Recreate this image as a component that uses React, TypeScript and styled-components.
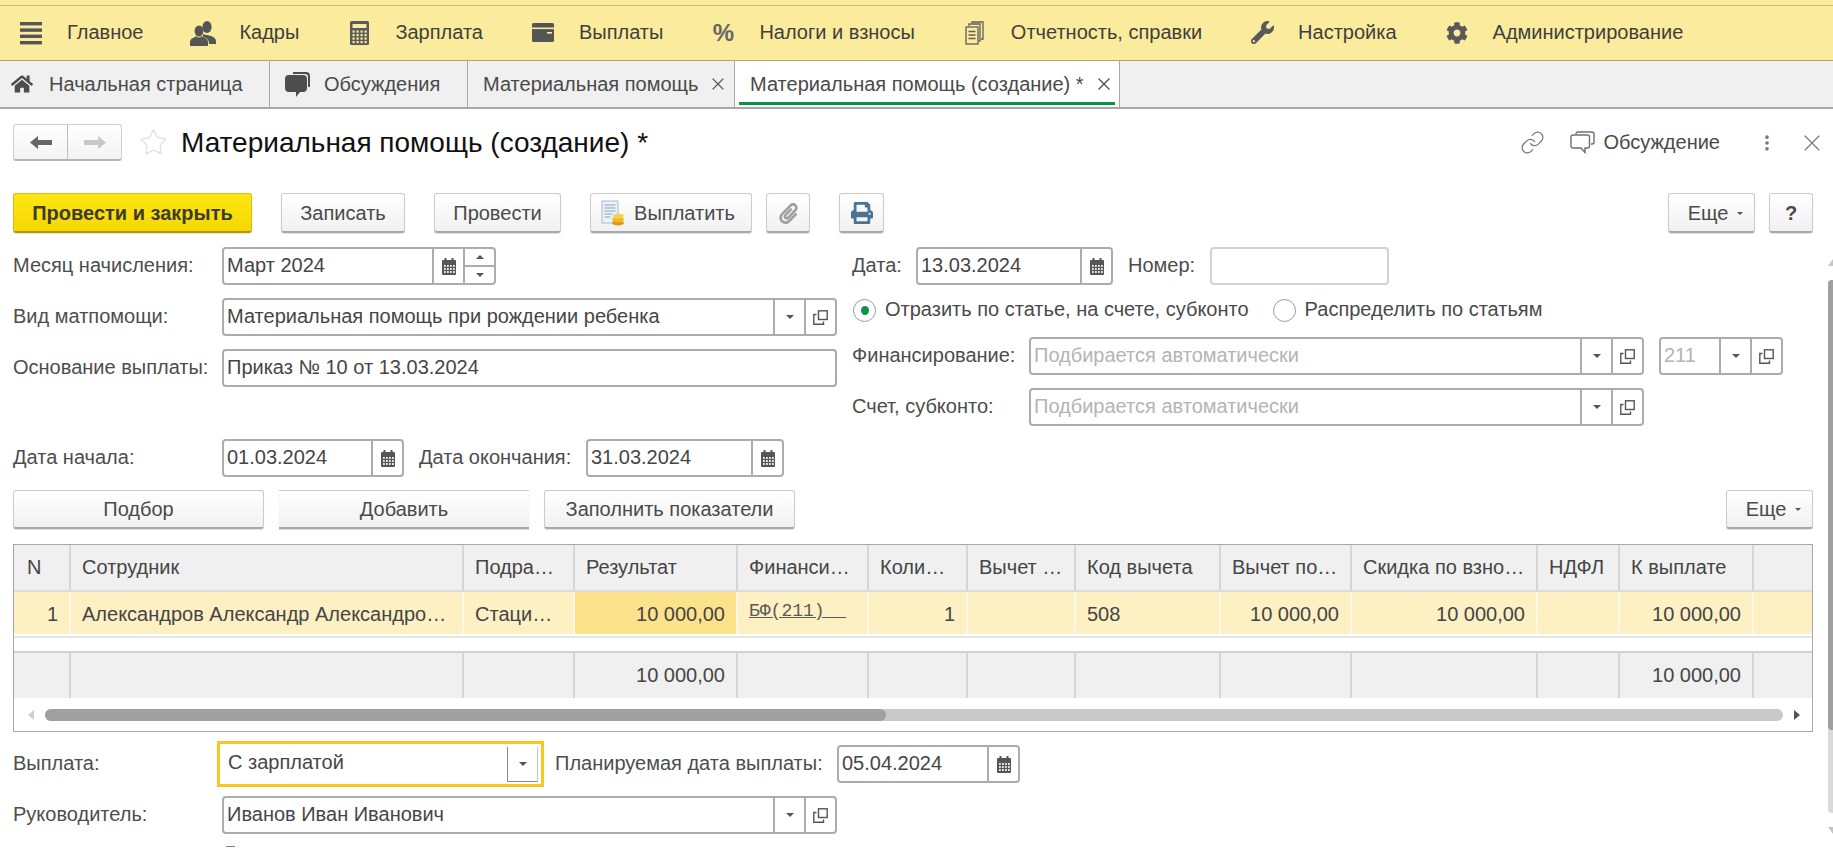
import React from 'react'
import styled, { createGlobalStyle } from 'styled-components'
import { FaHome, FaWrench, FaCog, FaPrint, FaPaperclip } from 'react-icons/fa'
import { Link, Star, X, EllipsisVertical } from 'lucide-react'

const GlobalStyle = createGlobalStyle`
  html, body {
    margin: 0;
    height: 100%;
    overflow: hidden;
    background: #fff;
  }
  body {
    font-family: "Liberation Sans", Arial, sans-serif;
    font-size: 20px;
    color: #4a4a4a;
  }
  * { box-sizing: border-box; }
`

const Page = styled.div`
  width: 1833px;
  height: 857px;
  display: flex;
  flex-direction: column;
  overflow: hidden;
`

/* top menu */
const TopMenu = styled.div`
  height: 61px;
  flex-shrink: 0;
  display: flex;
  align-items: center;
  gap: 45px;
  padding: 5px 0 0 16px;
  background: linear-gradient(#fbeb9c 0 5px, #cbbd78 5px 6px, #fbeb9c 6px);
  border-bottom: 1px solid #b3a768;
`

const MenuItem = styled.div`
  display: flex;
  align-items: center;
  gap: 21px;
  color: #3f3f3f;
  white-space: nowrap;
`

const MenuIcon = styled.span`
  width: 30px;
  display: flex;
  justify-content: center;
  color: #595959;
`

const PercentGlyph = styled.span`
  font-size: 24px;
  font-weight: 700;
  color: #666;
`

/* tabs */
const TabBar = styled.div`
  height: 48px;
  flex-shrink: 0;
  display: flex;
  background: #f0f0f0;
  border-bottom: 2px solid #a8a8a8;
`

const Tab = styled.div<{ $w: number; $pad: number; $active?: boolean }>`
  position: relative;
  width: ${p => p.$w}px;
  flex-shrink: 0;
  display: flex;
  align-items: center;
  padding-left: ${p => p.$pad}px;
  border-right: 1px solid #a8a8a8;
  background: ${p => (p.$active ? '#fff' : 'transparent')};
  color: #4a4a4a;
  white-space: nowrap;
  ${p =>
    p.$active &&
    `&::after {
      content: '';
      position: absolute;
      left: 4px;
      right: 4px;
      bottom: 2px;
      height: 3px;
      background: #0b9444;
    }`}
`

const TabIcon = styled.span<{ $gap: number }>`
  display: flex;
  margin-right: ${p => p.$gap}px;
  color: #4d4d4d;
`

const TabClose = styled.span`
  display: flex;
  margin-left: 10px;
  color: #555;
`

/* work area */
const Workspace = styled.div`
  flex: 1;
  display: flex;
  min-height: 0;
`

const Content = styled.div`
  flex: 1;
  min-width: 0;
  padding: 15px 15px 0 13px;
`

const VScroll = styled.div`
  width: 5px;
  flex-shrink: 0;
  padding-top: 150px;
  display: flex;
  flex-direction: column;
  align-items: flex-end;
`

const VArrow = styled.span<{ $down?: boolean }>`
  width: 5px;
  height: 0;
  border-left: 5px solid transparent;
  ${p => (p.$down ? 'border-top: 7px solid #c4c4c4;' : 'border-bottom: 7px solid #c4c4c4;')}
`

const VTrack = styled.div`
  width: 5px;
  height: 533px;
  margin: 14px 0 14px;
  background: #d9d9d9;
  border-radius: 4px 0 0 4px;
`

const VThumb = styled.div`
  height: 450px;
  background: #a0a0a0;
  border-radius: 4px 0 0 4px;
`

const TitleRow = styled.div`
  height: 37px;
  display: flex;
  align-items: center;
  margin-right: -13px;
`

const NavGroup = styled.div`
  width: 109px;
  height: 37px;
  display: flex;
  border: 1px solid #cfcfcf;
  border-bottom: 2px solid #b5b5b5;
  border-radius: 3px;
  background: linear-gradient(#fff, #f3f3f3);
`

const NavButton = styled.div<{ $first?: boolean }>`
  flex: 1;
  display: flex;
  align-items: center;
  justify-content: center;
  ${p => p.$first && 'border-right: 1px solid #bdbdbd;'}
`

const StarWrap = styled.span`
  display: flex;
  margin: 0 13px 0 17px;
  color: #dedede;
`

const Title = styled.h1`
  margin: 0;
  font-size: 28px;
  font-weight: 400;
  color: #111;
  white-space: nowrap;
`

const TitleActions = styled.div`
  margin-left: auto;
  display: flex;
  align-items: center;
  color: #777;
`

const DiscussText = styled.span`
  margin: 0 37px 0 8px;
  color: #4a4a4a;
`

const ActionIcon = styled.span<{ $mr?: number }>`
  display: flex;
  margin-right: ${p => p.$mr ?? 0}px;
`

const Toolbar = styled.div`
  height: 40px;
  margin-top: 32px;
  display: flex;
  gap: 29px;
`

const ButtonGroup = styled.div<{ $right?: boolean }>`
  display: flex;
  gap: 14px;
  ${p => p.$right && 'margin-left: auto;'}
`

const Button = styled.div<{ $w: number; $primary?: boolean; $flat?: boolean }>`
  width: ${p => p.$w}px;
  display: flex;
  align-items: center;
  justify-content: center;
  gap: 9px;
  padding-top: 1px;
  border: 1px solid #cbcbcb;
  border-bottom: 2px solid #a8a8a8;
  border-radius: 3px;
  background: linear-gradient(#fff, #f1f1f1);
  box-shadow: 0 1px 1px rgba(0, 0, 0, 0.12);
  color: #4a4a4a;
  white-space: nowrap;
  ${p =>
    p.$primary &&
    `background: linear-gradient(#ffe516, #f5d800);
     border-color: #d6bd10 #d6bd10 #b09a10;
     font-weight: 700;
     color: #3c3c2c;`}
  ${p => p.$flat && 'border-left: 0; border-right: 0; border-radius: 0;'}
`

const PayButton = styled(Button)`
  padding-right: 6px;
`

const MoreButton = styled(Button)`
  padding-left: 8px;
`

const Caret = styled.span<{ $up?: boolean }>`
  width: 0;
  height: 0;
  border-left: 4px solid transparent;
  border-right: 4px solid transparent;
  ${p => (p.$up ? 'border-bottom: 4px solid #555;' : 'border-top: 4px solid #555;')}
`

const SmallCaret = styled(Caret)`
  border-left-width: 3px;
  border-right-width: 3px;
  border-top-width: 3px;
`

/* form */
const FormGrid = styled.div`
  margin-top: 14px;
  display: grid;
  grid-template-columns: 823px 1fr;
  column-gap: 16px;
`

const Column = styled.div`
  display: flex;
  flex-direction: column;
`

const Row = styled.div<{ $mt?: number }>`
  height: 38px;
  display: flex;
  align-items: center;
  margin-top: ${p => p.$mt ?? 0}px;
`

const Label = styled.span<{ $w?: number; $ml?: number }>`
  ${p => p.$w && `width: ${p.$w}px;`}
  ${p => p.$ml && `margin-left: ${p.$ml}px;`}
  flex-shrink: 0;
  padding-bottom: 2px;
  color: #4d4d4d;
  white-space: nowrap;
`

const Field = styled.div<{ $w: number; $light?: boolean; $ml?: number }>`
  width: ${p => p.$w}px;
  height: 38px;
  flex-shrink: 0;
  display: flex;
  margin-left: ${p => p.$ml ?? 0}px;
  border: 2px solid ${p => (p.$light ? '#d2d2d2' : '#acacac')};
  border-radius: 4px;
  background: #fff;
`

const FieldText = styled.div<{ $muted?: boolean }>`
  flex: 1;
  min-width: 0;
  display: flex;
  align-items: center;
  padding: 0 0 2px 3px;
  color: ${p => (p.$muted ? '#b4b4b4' : '#464646')};
  white-space: nowrap;
  overflow: hidden;
`

const FieldCell = styled.div`
  width: 31px;
  flex-shrink: 0;
  display: flex;
  align-items: center;
  justify-content: center;
  border-left: 2px solid #acacac;
  color: #555;
`

const SpinCell = styled(FieldCell)`
  flex-direction: column;
`

const SpinPart = styled.div<{ $top?: boolean }>`
  flex: 1;
  width: 100%;
  display: flex;
  align-items: center;
  justify-content: center;
  ${p => p.$top && 'border-bottom: 2px solid #acacac;'}
`

const RadioRow = styled.div`
  height: 38px;
  margin: 5px 0 9px;
  display: flex;
  align-items: center;
  white-space: nowrap;
`

const Radio = styled.span<{ $on?: boolean; $ml?: number }>`
  width: 23px;
  height: 23px;
  flex-shrink: 0;
  margin: 2px 9px 0 ${p => p.$ml ?? 1}px;
  border: 1px solid #9a9a9a;
  border-radius: 50%;
  display: flex;
  align-items: center;
  justify-content: center;
  &::after {
    content: '';
    width: 8px;
    height: 9px;
    border-radius: 50%;
    background: ${p => (p.$on ? '#0b9444' : 'transparent')};
  }
`

const ButtonsRow = styled.div`
  height: 39px;
  margin-top: 13px;
  display: flex;
  gap: 15px;
`

/* table */
const columns = '57px 393px 111px 163px 131px 99px 108px 145px 131px 186px 82px 134px 1fr'

const TableFrame = styled.div`
  height: 188px;
  margin-top: 15px;
  display: flex;
  flex-direction: column;
  border: 1px solid #a8a8a8;
`

const TableRow = styled.div<{ $h: number; $bg: string; $line?: boolean }>`
  height: ${p => p.$h}px;
  flex-shrink: 0;
  display: grid;
  grid-template-columns: ${columns};
  background: ${p => p.$bg};
  ${p => p.$line && 'border-bottom: 2px solid #dcdcdc;'}
`

const Cell = styled.div<{ $right?: boolean; $active?: boolean; $sep?: string }>`
  display: flex;
  align-items: center;
  justify-content: ${p => (p.$right ? 'flex-end' : 'flex-start')};
  padding: 0 11px;
  border-right: 2px solid ${p => p.$sep ?? '#d6d6d6'};
  ${p => p.$active && 'background: #fde28c;'}
  color: #454545;
  white-space: nowrap;
  overflow: hidden;
  &:first-child {
    padding-left: 13px;
  }
  &:last-child {
    border-right: 0;
  }
`

const DataCell = styled(Cell)`
  padding-top: 2px;
`

const MonoLink = styled.span`
  font-family: "Liberation Mono", "Courier New", monospace;
  font-size: 18px;
  text-decoration: underline;
  white-space: pre;
  color: #5a5a5a;
  margin-top: -6px;
`

const EmptyRow = styled.div`
  height: 17px;
  flex-shrink: 0;
  border-top: 2px solid #e6e6e6;
  border-bottom: 2px solid #d2d2d2;
  margin-top: 2px;
`

const HScroll = styled.div`
  flex: 1;
  display: flex;
  align-items: center;
  padding: 0 12px 0 14px;
  gap: 11px;
`

const HArrow = styled.span<{ $right?: boolean }>`
  width: 0;
  height: 0;
  flex-shrink: 0;
  border-top: 5px solid transparent;
  border-bottom: 5px solid transparent;
  ${p => (p.$right ? 'border-left: 6px solid #555;' : 'border-right: 6px solid #cdcdcd;')}
`

const HTrack = styled.div`
  flex: 1;
  height: 12px;
  border-radius: 6px;
  background: #c9c9c9;
`

const HThumb = styled.div`
  width: 841px;
  height: 12px;
  border-radius: 6px;
  background: #a0a0a0;
`

/* bottom */
const PayRow = styled.div`
  height: 46px;
  margin-top: 9px;
  display: flex;
  align-items: center;
`

const FocusField = styled.div`
  width: 327px;
  height: 46px;
  flex-shrink: 0;
  display: flex;
  align-items: center;
  padding: 0 3px 0 8px;
  border: 3px solid #f8c81e;
  background: #fff;
  color: #464646;
`

const FocusText = styled.span`
  flex: 1;
  padding-bottom: 3px;
`

const FocusCell = styled.span`
  width: 31px;
  height: 35px;
  display: flex;
  align-items: center;
  justify-content: center;
  border-left: 1px solid #8a8a8a;
  border-bottom: 1px solid #8a8a8a;
  border-right: 1px solid #c8c8c8;
`

const ManagerRow = styled(Row)`
  margin-top: 9px;
`

const Dash = styled.div`
  width: 9px;
  height: 1px;
  margin: 12px 0 0 213px;
  background: #8f8458;
`

/* drawings */
const BurgerIcon = () => (
  <svg width="22" height="24" viewBox="0 0 22 24" fill="#555">
    <rect y="1" width="22" height="3.4" />
    <rect y="7.4" width="22" height="3.4" />
    <rect y="13.6" width="22" height="3.4" />
    <rect y="20" width="22" height="3.4" />
  </svg>
)

const PeopleIcon = () => (
  <svg width="26" height="26" viewBox="0 0 26 26" fill="#555">
    <ellipse cx="17" cy="7" rx="4.6" ry="6" />
    <path d="M13 14c5 2 12 1 13 7v3h-7c0-4-2-6-6-7z" />
    <ellipse cx="9" cy="11" rx="4.4" ry="5.6" />
    <path d="M0 26v-4c0-4 5-4 6-6 2 2 4 2 6 0 1 2 6 2 6 6v4z" />
  </svg>
)

const CalcIcon = () => (
  <svg width="19" height="24" viewBox="0 0 19 24">
    <rect width="19" height="24" rx="1.5" fill="#5a5a5a" />
    <rect x="2.5" y="3" width="14" height="4" fill="#fbeb9c" />
    {[9.5, 13, 16.5, 20].map(y =>
      [2.5, 6.5, 10.5, 14.5].map(x => <rect key={`${x}-${y}`} x={x} y={y} width="2.2" height="2.2" fill="#fbeb9c" />)
    )}
  </svg>
)

const WalletIcon = () => (
  <svg width="22" height="19" viewBox="0 0 22 19">
    <rect width="22" height="19" rx="1.5" fill="#555" />
    <rect y="4.5" width="22" height="1.6" fill="#fbeb9c" />
    <rect x="15" y="9" width="5" height="1.6" fill="#fbeb9c" />
  </svg>
)

const DocsIcon = () => (
  <svg width="19" height="24" viewBox="0 0 19 24" fill="none" stroke="#5f5f5f" strokeWidth="1.3">
    <rect x="1" y="6" width="12" height="17" fill="#fbeb9c" />
    <path d="M3.5 10.5h7M3.5 14h7M3.5 17.5h7" strokeWidth="1.6" />
    <path d="M4 5V3h11v17h-1.5M7 2V1h11v17h-2" />
  </svg>
)

const ChatsFilled = () => (
  <svg width="25" height="25" viewBox="0 0 25 25" fill="#4d4d4d">
    <path d="M8 0h13a4 4 0 0 1 4 4v11h-2V5a3 3 0 0 0-3-3H8z" />
    <path d="M4 3h14a4 4 0 0 1 4 4v9a4 4 0 0 1-4 4h-3l-4 5v-5H4a4 4 0 0 1-4-4V7a4 4 0 0 1 4-4z" />
  </svg>
)

const ChatsOutline = () => (
  <svg width="25" height="23" viewBox="0 0 25 23" fill="none" stroke="#6f6f6f" strokeWidth="1.4">
    <path d="M6 3V2.5A1.8 1.8 0 0 1 7.8 1H22a2 2 0 0 1 2 2v8a2 2 0 0 1-2 2h-1" />
    <path d="M3 4h14.5a2 2 0 0 1 2 2v9a2 2 0 0 1-2 2H15v4.5L11 17H3a2 2 0 0 1-2-2V6a2 2 0 0 1 2-2z" fill="#fff" />
  </svg>
)

const ArrowIcon = ({ color, flip }: { color: string; flip?: boolean }) => (
  <svg width="22" height="13" viewBox="0 0 22 13" fill={color} transform={flip ? 'scale(-1 1)' : undefined}>
    <path d="M0 6.5 8 0v4h14v5H8v4z" />
  </svg>
)

const CalendarIcon = () => (
  <svg width="14" height="17" viewBox="0 0 14 17">
    <rect y="2" width="14" height="15" rx="1" fill="#565656" />
    <rect x="2.5" y="0" width="2" height="4" fill="#565656" />
    <rect x="9.5" y="0" width="2" height="4" fill="#565656" />
    {[7, 10, 13].map(y =>
      [2, 5, 8, 11].map(x => <rect key={`${x}-${y}`} x={x} y={y} width="1.8" height="2" fill="#e6e6e6" />)
    )}
  </svg>
)

const OpenIcon = () => (
  <svg width="15" height="15" viewBox="0 0 15 15" fill="none" stroke="#555" strokeWidth="1.4">
    <rect x="5.5" y="0.8" width="8.7" height="8.7" />
    <path d="M3.5 4.5H.8v9.7h9.7v-2.7" />
  </svg>
)

const PayDocIcon = () => (
  <svg width="24" height="26" viewBox="0 0 24 26">
    <rect x="1" y="1" width="16" height="22" fill="#eaf1f8" stroke="#a9bccd" />
    <path d="M3.5 5h11M3.5 8h11M3.5 11h11M3.5 14h8M3.5 17h6" stroke="#8ea4b8" strokeWidth="1.2" />
    <ellipse cx="17" cy="23" rx="6" ry="2.6" fill="#d99a16" />
    <ellipse cx="17" cy="19.6" rx="6" ry="2.6" fill="#efb92a" />
    <ellipse cx="17.5" cy="16" rx="5.4" ry="2.6" fill="#f7d24a" />
  </svg>
)

const DropDown = () => (
  <FieldCell>
    <Caret />
  </FieldCell>
)

const OpenCell = () => (
  <FieldCell>
    <OpenIcon />
  </FieldCell>
)

const CalendarCell = () => (
  <FieldCell>
    <CalendarIcon />
  </FieldCell>
)

const menuItems: { text: string; icon: React.ReactNode }[] = [
  { text: 'Главное', icon: <BurgerIcon /> },
  { text: 'Кадры', icon: <PeopleIcon /> },
  { text: 'Зарплата', icon: <CalcIcon /> },
  { text: 'Выплаты', icon: <WalletIcon /> },
  { text: 'Налоги и взносы', icon: <PercentGlyph>%</PercentGlyph> },
  { text: 'Отчетность, справки', icon: <DocsIcon /> },
  { text: 'Настройка', icon: <FaWrench size={23} /> },
  { text: 'Администрирование', icon: <FaCog size={22} /> },
]

const header = [
  'N', 'Сотрудник', 'Подра…', 'Результат', 'Финанси…', 'Коли…', 'Вычет …',
  'Код вычета', 'Вычет по…', 'Скидка по взно…', 'НДФЛ', 'К выплате', '',
]

const rightCols = [0, 3, 5, 8, 9, 11]

const dataRow = [
  '1', 'Александров Александр Александро…', 'Стаци…', '10 000,00', '', '1', '',
  '508', '10 000,00', '10 000,00', '', '10 000,00', '',
]

const totals = ['', '', '', '10 000,00', '', '', '', '', '', '', '', '10 000,00', '']

export default function App() {
  return (
    <Page>
      <GlobalStyle />
      <TopMenu>
        {menuItems.map(item => (
          <MenuItem key={item.text}>
            <MenuIcon>{item.icon}</MenuIcon>
            {item.text}
          </MenuItem>
        ))}
      </TopMenu>

      <TabBar>
        <Tab $w={270} $pad={11}>
          <TabIcon $gap={16}><FaHome size={22} /></TabIcon>
          Начальная страница
        </Tab>
        <Tab $w={198} $pad={15}>
          <TabIcon $gap={14}><ChatsFilled /></TabIcon>
          Обсуждения
        </Tab>
        <Tab $w={267} $pad={15}>
          Материальная помощь
          <TabClose><X size={20} strokeWidth={1.3} /></TabClose>
        </Tab>
        <Tab $w={385} $pad={15} $active>
          Материальная помощь (создание) *
          <TabClose><X size={20} strokeWidth={1.6} /></TabClose>
        </Tab>
      </TabBar>

      <Workspace>
        <Content>
          <TitleRow>
            <NavGroup>
              <NavButton $first><ArrowIcon color="#666" /></NavButton>
              <NavButton><ArrowIcon color="#c8c8c8" flip /></NavButton>
            </NavGroup>
            <StarWrap><Star size={29} strokeWidth={1} /></StarWrap>
            <Title>Материальная помощь (создание) *</Title>
            <TitleActions>
              <ActionIcon $mr={25}><Link size={25} strokeWidth={1.2} /></ActionIcon>
              <ChatsOutline />
              <DiscussText>Обсуждение</DiscussText>
              <ActionIcon $mr={21}><EllipsisVertical size={20} strokeWidth={2.4} /></ActionIcon>
              <X size={28} strokeWidth={1} />
            </TitleActions>
          </TitleRow>

          <Toolbar>
            <Button $w={239} $primary>Провести и закрыть</Button>
            <Button $w={124}>Записать</Button>
            <Button $w={127}>Провести</Button>
            <ButtonGroup>
              <PayButton $w={162}><PayDocIcon />Выплатить</PayButton>
              <Button $w={44}><FaPaperclip size={21} color="#a0a0a0" /></Button>
            </ButtonGroup>
            <Button $w={45}><FaPrint size={22} color="#4b7394" /></Button>
            <ButtonGroup $right>
              <MoreButton $w={87}>Еще <SmallCaret /></MoreButton>
              <Button $w={44}><b>?</b></Button>
            </ButtonGroup>
          </Toolbar>

          <FormGrid>
            <Column>
              <Row>
                <Label $w={209}>Месяц начисления:</Label>
                <Field $w={274}>
                  <FieldText>Март 2024</FieldText>
                  <CalendarCell />
                  <SpinCell>
                    <SpinPart $top><Caret $up /></SpinPart>
                    <SpinPart><Caret /></SpinPart>
                  </SpinCell>
                </Field>
              </Row>
              <Row $mt={13}>
                <Label $w={209}>Вид матпомощи:</Label>
                <Field $w={615}>
                  <FieldText>Материальная помощь при рождении ребенка</FieldText>
                  <DropDown />
                  <OpenCell />
                </Field>
              </Row>
              <Row $mt={13}>
                <Label $w={209}>Основание выплаты:</Label>
                <Field $w={615}>
                  <FieldText>Приказ № 10 от 13.03.2024</FieldText>
                </Field>
              </Row>
              <Row $mt={52}>
                <Label $w={209}>Дата начала:</Label>
                <Field $w={182}>
                  <FieldText>01.03.2024</FieldText>
                  <CalendarCell />
                </Field>
                <Label $w={167} $ml={15}>Дата окончания:</Label>
                <Field $w={198}>
                  <FieldText>31.03.2024</FieldText>
                  <CalendarCell />
                </Field>
              </Row>
            </Column>

            <Column>
              <Row>
                <Label $w={64}>Дата:</Label>
                <Field $w={197}>
                  <FieldText>13.03.2024</FieldText>
                  <CalendarCell />
                </Field>
                <Label $w={82} $ml={15}>Номер:</Label>
                <Field $w={179} $light />
              </Row>
              <RadioRow>
                <Radio $on />
                Отразить по статье, на счете, субконто
                <Radio $ml={24} />
                Распределить по статьям
              </RadioRow>
              <Row>
                <Label $w={177}>Финансирование:</Label>
                <Field $w={615}>
                  <FieldText $muted>Подбирается автоматически</FieldText>
                  <DropDown />
                  <OpenCell />
                </Field>
                <Field $w={124} $ml={15}>
                  <FieldText $muted>211</FieldText>
                  <DropDown />
                  <OpenCell />
                </Field>
              </Row>
              <Row $mt={13}>
                <Label $w={177}>Счет, субконто:</Label>
                <Field $w={615}>
                  <FieldText $muted>Подбирается автоматически</FieldText>
                  <DropDown />
                  <OpenCell />
                </Field>
              </Row>
            </Column>
          </FormGrid>

          <ButtonsRow>
            <Button $w={251}>Подбор</Button>
            <Button $w={250} $flat>Добавить</Button>
            <Button $w={251}>Заполнить показатели</Button>
            <ButtonGroup $right>
              <MoreButton $w={87}>Еще <SmallCaret /></MoreButton>
            </ButtonGroup>
          </ButtonsRow>

          <TableFrame>
            <TableRow $h={47} $bg="#f0f0f0" $line>
              {header.map((text, i) => (
                <Cell key={i}>{text}</Cell>
              ))}
            </TableRow>
            <TableRow $h={42} $bg="#fdf0c3">
              {dataRow.map((text, i) => (
                <DataCell key={i} $right={rightCols.includes(i)} $active={i === 3} $sep="#fff9e6">
                  {i === 4 ? <MonoLink>{'БФ(211)  '}</MonoLink> : text}
                </DataCell>
              ))}
            </TableRow>
            <EmptyRow />
            <TableRow $h={45} $bg="#f0f0f0">
              {totals.map((text, i) => (
                <Cell key={i} $right>{text}</Cell>
              ))}
            </TableRow>
            <HScroll>
              <HArrow />
              <HTrack><HThumb /></HTrack>
              <HArrow $right />
            </HScroll>
          </TableFrame>

          <PayRow>
            <Label $w={204}>Выплата:</Label>
            <FocusField>
              <FocusText>С зарплатой</FocusText>
              <FocusCell><Caret /></FocusCell>
            </FocusField>
            <Label $w={282} $ml={11}>Планируемая дата выплаты:</Label>
            <Field $w={183}>
              <FieldText>05.04.2024</FieldText>
              <CalendarCell />
            </Field>
          </PayRow>
          <ManagerRow>
            <Label $w={209}>Руководитель:</Label>
            <Field $w={615}>
              <FieldText>Иванов Иван Иванович</FieldText>
              <DropDown />
              <OpenCell />
            </Field>
          </ManagerRow>
          <Dash />
        </Content>

        <VScroll>
          <VArrow />
          <VTrack><VThumb /></VTrack>
          <VArrow $down />
        </VScroll>
      </Workspace>
    </Page>
  )
}
